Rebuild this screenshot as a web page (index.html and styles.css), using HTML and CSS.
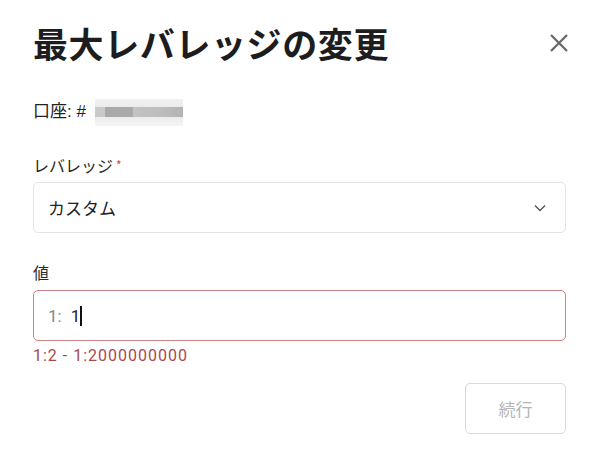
FILE: index.html
```html
<!DOCTYPE html>
<html lang="ja">
<head>
<meta charset="utf-8">
<link rel="stylesheet" href="styles.css">
</head>
<body>
<div class="dialog">
  <div class="header">
    <h1 class="title">最大レバレッジの変更</h1>
    <button class="close" aria-label="close">
      <svg width="20" height="20" viewBox="0 0 20 20"><path d="M2 2 L18 18 M18 2 L2 18" stroke="#666" stroke-width="2.2" fill="none"/></svg>
    </button>
  </div>
  <div class="account">口座: # <span class="blur"><span class="b1"></span><span class="b2"></span><span class="b3"></span></span></div>
  <div class="field">
    <div class="label">レバレッジ<span class="req">*</span></div>
    <div class="select">
      <span>カスタム</span>
      <svg width="12" height="8" viewBox="0 0 12 8"><path d="M1 1.5 L6 6.5 L11 1.5" stroke="#555" stroke-width="1.4" fill="none"/></svg>
    </div>
  </div>
  <div class="field value-field">
    <div class="label">値</div>
    <div class="input"><span class="prefix">1:</span><span class="val">1</span><span class="caret"></span></div>
    <div class="error">1:2 - 1:2000000000</div>
  </div>
  <div class="actions">
    <button class="continue">続行</button>
  </div>
</div>
</body>
</html>
```
FILE: styles.css
```css
* { box-sizing: border-box; }
html, body { margin: 0; padding: 0; background: #fff; }
body {
  font-family: "Noto Sans CJK JP", "Noto Sans", sans-serif;
  color: #222;
}
.dialog {
  width: 600px;
  padding: 20px 34px 0 33px;
}
.header {
  display: flex;
  justify-content: space-between;
  align-items: center;
  height: 46px;
}
.title {
  margin: 0;
  font-size: 35px;
  font-weight: 700;
  letter-spacing: 0.6px;
  line-height: 46px;
  color: #1d1d1f;
}
.close {
  border: 0;
  background: none;
  padding: 0;
  margin-right: -3px;
  width: 20px;
  height: 20px;
  display: flex;
}
.account {
  margin-top: 33px;
  font-size: 17px;
  line-height: 26px;
  height: 26px;
  display: flex;
  align-items: center;
  color: #222;
  font-family: "Liberation Sans", "Noto Sans CJK JP", sans-serif;
}
.blur {
  display: inline-flex;
  margin-left: 9px;
  height: 27px;
  width: 88px;
  background: linear-gradient(#f0f0f0 0%, #ececec 35%, #ececec 65%, #f4f4f4 100%);
  position: relative;
  align-items: center;
}
.blur span { height: 10px; display: block; }
.b1 { width: 10px; background: #c9c9c9; }
.b2 { width: 28px; background: #a9a9aa; }
.b3 { width: 50px; background: linear-gradient(90deg,#c3c3c4,#bdbdbe 50%,#b4b4b5); }
.field { margin-top: 30px; }
.label {
  font-size: 16px;
  line-height: 20px;
  color: #2a2a2a;
  margin-bottom: 7px;
}
.req { color: #c94a4a; font-size: 12px; vertical-align: top; margin-left: 3px; }
.select {
  height: 51px;
  border: 1px solid #e4e4e6;
  border-radius: 5px;
  display: flex;
  align-items: center;
  justify-content: space-between;
  padding: 0 19px 0 14px;
  font-size: 17px;
  color: #222;
}
.value-field { margin-top: 29px; }
.value-field .label { margin-bottom: 8px; }
.input {
  height: 51px;
  border: 1px solid #cf8386;
  border-radius: 5px;
  display: flex;
  align-items: center;
  padding: 0 14px;
  font-size: 17px;
  font-family: "Roboto", "Noto Sans", sans-serif;
}
.prefix { color: #888; margin-right: 9px; }
.val { color: #222; }
.caret { width: 2px; height: 20px; background: #111; margin-left: 0; }
.error {
  margin-top: 5px;
  font-family: "Roboto", "Noto Sans", sans-serif;
  font-size: 16px;
  letter-spacing: 1px;
  color: #a9494a;
  line-height: 20px;
}
.actions {
  display: flex;
  justify-content: flex-end;
  margin-top: 17px;
}
.continue {
  width: 101px;
  height: 51px;
  border: 1px solid #d9d9db;
  border-radius: 5px;
  background: #fff;
  font-family: "Noto Sans CJK JP", sans-serif;
  font-size: 17px;
  color: #b5b5b5;
}
```
